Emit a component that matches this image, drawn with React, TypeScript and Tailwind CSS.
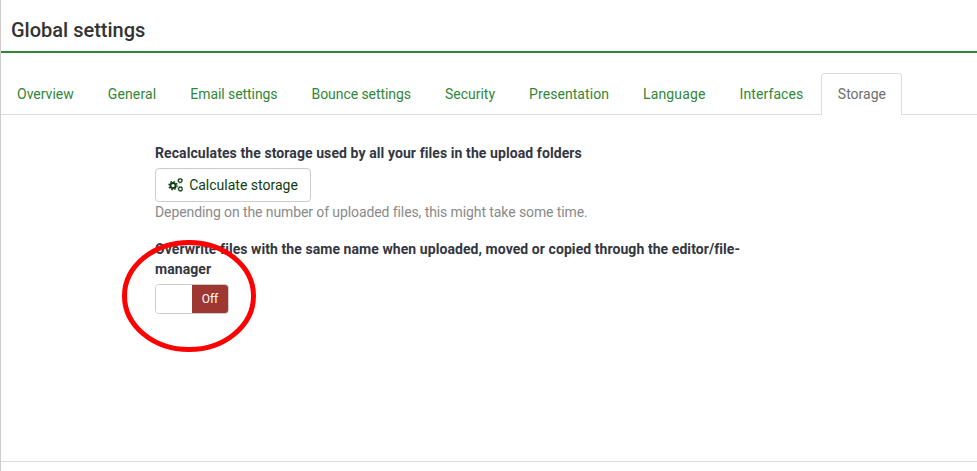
import React from "react";

const tabs = [
  { t: "Overview", c: "" },
  { t: "General", c: "tracking-[0.14px]" },
  { t: "Email settings", c: "tracking-[-0.07px]" },
  { t: "Bounce settings", c: "tracking-[-0.07px]" },
  { t: "Security", c: "" },
  { t: "Presentation", c: "tracking-[0.07px]" },
  { t: "Language", c: "tracking-[0.14px]" },
  { t: "Interfaces", c: "tracking-[0.1px]" },
];

function Cogs() {
  return (
    <svg width="15" height="14" viewBox="0 0 15 14" className="mr-[6px] shrink-0" fill="none" stroke="#0f3d12">
      <circle cx="5" cy="7.6" r="2.6" strokeWidth="1.9" />
      <circle cx="5" cy="7.6" r="4.1" strokeWidth="1.3" strokeDasharray="1.6 1.62" />
      <circle cx="12.2" cy="2.6" r="1.8" strokeWidth="1.2" />
      <circle cx="12.2" cy="2.6" r="2.6" strokeWidth="0.6" strokeDasharray="1 1.04" />
      <circle cx="12.4" cy="11" r="1.8" strokeWidth="1.2" />
      <circle cx="12.4" cy="11" r="2.6" strokeWidth="0.6" strokeDasharray="1 1.04" />
    </svg>
  );
}

export default function App() {
  return (
    <div className="relative h-[471px] w-[977px] overflow-hidden bg-white font-['Roboto',sans-serif] text-[14px] text-[#333641]">
      <div className="flex h-full flex-col border-l border-[#cccccc]">
        <div className="h-[53px] shrink-0 border-b-2 border-[#328637] pl-[10px] pt-[18px]">
          <h1 className="text-[20px] font-medium leading-[25px] text-[#333333]">Global settings</h1>
        </div>
        <div className="mt-[20px] flex h-[42px] shrink-0 border-b border-[#dddddd] pl-0">
          {tabs.map(({ t, c }) => (
            <a key={t} className={"mr-[2px] block whitespace-nowrap px-[16px] pt-[11px] leading-[20px] text-[#328637] " + c}>
              {t}
            </a>
          ))}
          <a className="-mb-px block h-[42px] w-[81px] rounded-t-[4px] border border-b-0 border-[#dddddd] bg-white pt-[10px] text-center leading-[20px] text-[#6e6e6e]">
            Storage
          </a>
        </div>
        <div className="flex-1 pl-[154px] pt-[28px]">
          <div className="w-[600px]">
            <div className="font-bold leading-[20px] tracking-[0.087px] text-[#333641]">
              Recalculates the storage used by all your files in the upload folders
            </div>
            <button className="mt-[5px] flex h-[34px] w-[156px] items-center justify-center rounded-[4px] border border-[#cccccc] bg-white text-[#0f3d12]">
              <Cogs />
              Calculate storage
            </button>
            <div className="leading-[20px] tracking-[-0.095px] text-[#8a8a8a]">
              Depending on the number of uploaded files, this might take some time.
            </div>
            <div className="mt-[17px] font-bold leading-[20px] tracking-[0.07px] text-[#333641]">
              Overwrite files with the same name when uploaded, moved or copied through the editor/file-manager
            </div>
            <div className="mt-[5px] flex h-[30px] w-[74px] overflow-hidden rounded-[4px] border border-[#cccccc]">
              <div className="w-[36px] bg-white" />
              <div className="flex flex-1 items-center justify-center bg-[#9e3631] text-[12px] text-white">Off</div>
            </div>
          </div>
        </div>
        <div className="h-[10px] shrink-0 border-t border-[#dddddd]" />
      </div>
      <svg className="pointer-events-none absolute left-[120px] top-[238px]" width="140" height="116" viewBox="0 0 140 116">
        <ellipse cx="69" cy="58" rx="64.5" ry="53.5" fill="none" stroke="#ff0000" strokeWidth="5" />
      </svg>
    </div>
  );
}
